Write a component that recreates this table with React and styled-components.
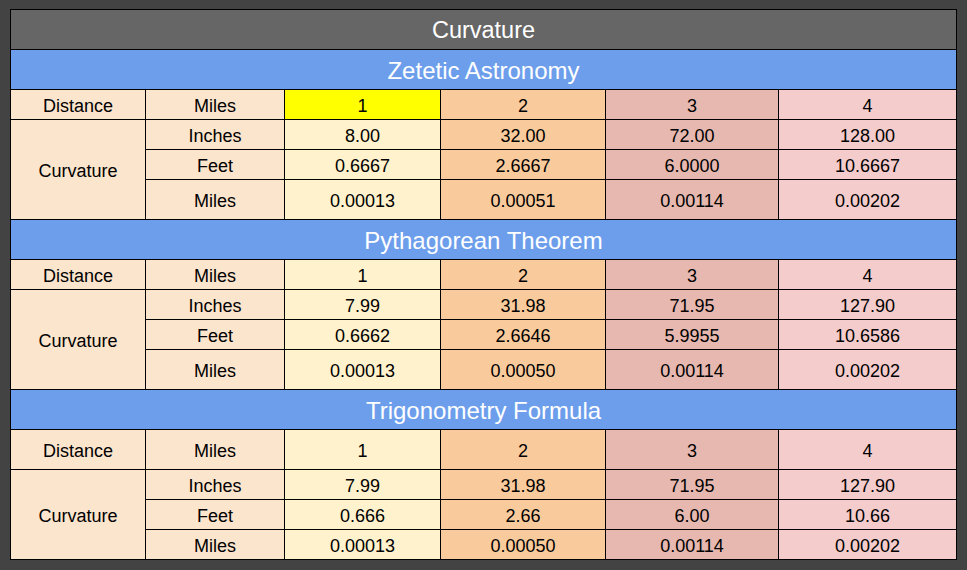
import React from "react";
import styled, { createGlobalStyle } from "styled-components";

const GlobalStyle = createGlobalStyle`
  html, body {
    margin: 0;
    background: #434343;
  }
  body {
    padding: 9px 0 0 10px;
    font-family: "Liberation Sans", Arial, Helvetica, sans-serif;
  }
`;

const COLUMNS = "134px 138px 155px 164px 172px 177px";

const colours = {
  label: "#fce5cd",
  c1: "#fff2cc",
  c2: "#f9cb9c",
  c3: "#e6b8af",
  c4: "#f4cccc",
  hot: "#ffff00",
};

const Sheet = styled.div`
  width: 947px;
  display: flex;
  flex-direction: column;
  gap: 1px;
  padding: 1px;
  box-sizing: border-box;
  background: #000;
`;

const Title = styled.div`
  height: 39px;
  box-sizing: border-box;
  padding-top: 2px;
  display: flex;
  align-items: center;
  justify-content: center;
  background: #666666;
  color: #fff;
  font-size: 23.5px;
`;

const Section = styled.div`
  display: grid;
  grid-template-columns: ${COLUMNS};
  grid-template-rows: ${(p) => p.$rows};
  gap: 1px;
`;

const SectionHead = styled.div`
  grid-column: 1 / -1;
  padding-top: 2px;
  display: flex;
  align-items: center;
  justify-content: center;
  background: #6d9eeb;
  color: #fff;
  font-size: 24px;
`;

const Cell = styled.div`
  display: flex;
  align-items: center;
  justify-content: center;
  padding-top: 4px;
  background: ${(p) => p.$bg};
  color: #000;
  font-size: 18px;
  grid-row: ${(p) => (p.$span ? `span ${p.$span}` : "auto")};
`;

const sections = [
  {
    name: "Zetetic Astronomy",
    rows: "39px 29px 29px 29px 39px",
    hot: true,
    inches: ["8.00", "32.00", "72.00", "128.00"],
    feet: ["0.6667", "2.6667", "6.0000", "10.6667"],
    miles: ["0.00013", "0.00051", "0.00114", "0.00202"],
  },
  {
    name: "Pythagorean Theorem",
    rows: "39px 29px 29px 29px 39px",
    inches: ["7.99", "31.98", "71.95", "127.90"],
    feet: ["0.6662", "2.6646", "5.9955", "10.6586"],
    miles: ["0.00013", "0.00050", "0.00114", "0.00202"],
  },
  {
    name: "Trigonometry Formula",
    rows: "39px 39px 29px 29px 29px",
    inches: ["7.99", "31.98", "71.95", "127.90"],
    feet: ["0.666", "2.66", "6.00", "10.66"],
    miles: ["0.00013", "0.00050", "0.00114", "0.00202"],
  },
];

const colBg = ["c1", "c2", "c3", "c4"];

const ValueCells = ({ values, hotFirst }) =>
  values.map((v, i) => (
    <Cell key={i} $bg={hotFirst && i === 0 ? colours.hot : colours[colBg[i]]}>
      {v}
    </Cell>
  ));

const TableSection = ({ s }) => (
  <Section $rows={s.rows}>
    <SectionHead>{s.name}</SectionHead>

    <Cell $bg={colours.label}>Distance</Cell>
    <Cell $bg={colours.label}>Miles</Cell>
    <ValueCells values={["1", "2", "3", "4"]} hotFirst={s.hot} />

    <Cell $bg={colours.label} $span={3}>
      Curvature
    </Cell>
    <Cell $bg={colours.label}>Inches</Cell>
    <ValueCells values={s.inches} />
    <Cell $bg={colours.label}>Feet</Cell>
    <ValueCells values={s.feet} />
    <Cell $bg={colours.label}>Miles</Cell>
    <ValueCells values={s.miles} />
  </Section>
);

export default function App() {
  return (
    <>
      <GlobalStyle />
      <Sheet>
        <Title>Curvature</Title>
        {sections.map((s) => (
          <TableSection key={s.name} s={s} />
        ))}
      </Sheet>
    </>
  );
}
